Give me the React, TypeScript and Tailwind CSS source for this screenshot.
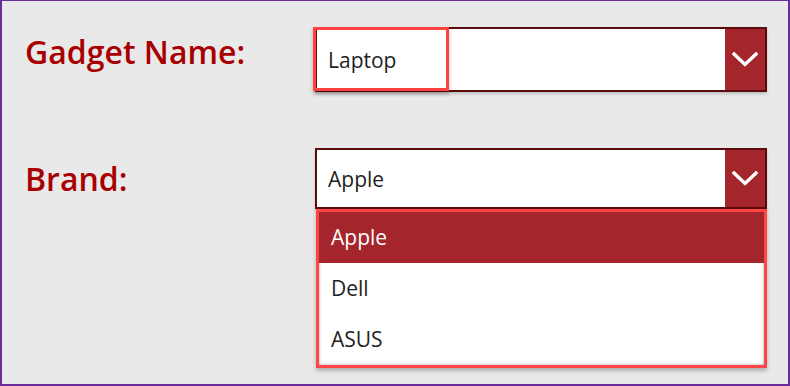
const Chevron = () => (
  <svg width="26" height="15" viewBox="0 0 26 15" fill="none">
    <polyline points="2,2 13,12.5 24,2" stroke="white" strokeWidth="3.4" strokeLinecap="square" />
  </svg>
)

const Combo = ({ value, className = "" }: { value: string; className?: string }) => (
  <div className={`flex w-[452px] border-2 border-[#5a0b0b] bg-white shadow-[0_2px_3px_rgba(0,0,0,0.18)] ${className}`}>
    <div className="flex flex-1 items-center pl-[11px] pt-[3px] text-[21px] text-[#222]">{value}</div>
    <div className="flex w-[40px] items-center justify-center bg-[#a4262c]">
      <Chevron />
    </div>
  </div>
)

const options = ["Apple", "Dell", "ASUS"]

export default function App() {
  return (
    <div
      className="relative h-[386px] w-[790px] overflow-hidden border-t border-l-2 border-r-2 border-b-2 border-[#6a2c9c] bg-[#e9e9e9] pl-[23px] pt-[26px]"
      style={{ fontFamily: '"Open Sans", "Noto Sans", sans-serif' }}
    >
      {/* Gadget name row */}
      <div className="flex">
        <div className="mt-[5px] w-[290px] text-[32px] leading-[40px] font-semibold text-[#a80000]">Gadget Name:</div>
        <div className="relative">
          <Combo value="Laptop" className="h-[65px]" />
          <div className="absolute left-[-2px] top-0 h-[64px] w-[136px] border-[3px] border-[#ff4141] shadow-[0_3px_4px_rgba(0,0,0,0.25)]" />
        </div>
      </div>

      {/* Brand row */}
      <div className="mt-[56px] flex">
        <div className="mt-[11px] w-[290px] text-[32px] leading-[40px] font-semibold text-[#a80000]">Brand:</div>
        <div className="flex flex-col">
          <Combo value="Apple" className="h-[61px]" />
          <div className="ml-px w-[451px] border-[3px] border-[#ff4545] bg-white shadow-[0_3px_4px_rgba(0,0,0,0.25)]">
            <div className="shadow-[inset_0_0_3px_rgba(0,0,0,0.4)]">
              {options.map((o, i) => (
                <div
                  key={o}
                  className={`flex h-[51px] items-center pl-[12px] text-[21px] ${
                    i === 0 ? "bg-[#a4262c] text-white" : "text-[#222]"
                  }`}
                >
                  {o}
                </div>
              ))}
            </div>
          </div>
        </div>
      </div>
    </div>
  )
}
